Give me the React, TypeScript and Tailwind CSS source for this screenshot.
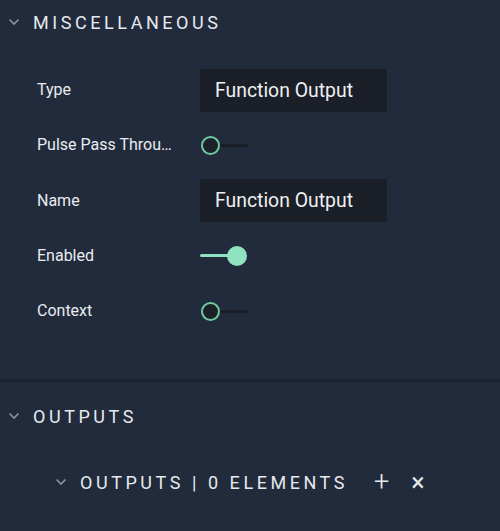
import React from "react";

const Chevron = ({ className = "" }: { className?: string }) => (
  <svg width="12" height="8" viewBox="0 0 12 8" className={className}>
    <path d="M1.5 1.5 L6 6 L10.5 1.5" fill="none" stroke="#8b93a1" strokeWidth="1.6" />
  </svg>
);

const Toggle = ({ on }: { on: boolean }) =>
  on ? (
    <div className="relative w-[48px] h-[20px] flex items-center">
      <div className="h-[3px] w-[38px] bg-[#8fe3c0] rounded-full" />
      <div className="absolute left-[27px] top-0 w-[20px] h-[20px] rounded-full bg-[#8fe3c0]" />
    </div>
  ) : (
    <div className="relative w-[48px] h-[20px] flex items-center">
      <div className="absolute left-[10px] h-[3px] w-[37px] bg-[#181d26] rounded-full" />
      <div className="absolute left-0 top-[1px] w-[19px] h-[19px] rounded-full border-[2.5px] border-[#6fc8a0] bg-[#1b2029]" />
    </div>
  );

const Row = ({ label, children }: { label: string; children: React.ReactNode }) => (
  <div className="h-[55.25px] flex items-center">
    <div className="w-[163px] pl-[37px] box-content text-[16px] text-[#e9ecef] whitespace-nowrap">{label}</div>
    <div className="flex items-center">{children}</div>
  </div>
);

const Input = ({ value }: { value: string }) => (
  <div className="w-[187px] h-[43px] bg-[#1a1f28] flex items-center pl-[15px] text-[19.4px] text-[#eef0f2]">
    {value}
  </div>
);

export default function App() {
  return (
    <div
      className="w-[500px] h-[531px] bg-[#222b3c] overflow-hidden"
      style={{ fontFamily: "Roboto, 'Liberation Sans', sans-serif" }}
    >
      <div className="h-[44px] flex items-center">
        <Chevron className="ml-[8px] mr-[13px]" />
        <span className="text-[18px] tracking-[3.55px] text-[#e6e9ee]">MISCELLANEOUS</span>
      </div>
      <div className="pt-[18.5px]">
        <Row label="Type">
          <Input value="Function Output" />
        </Row>
        <Row label="Pulse Pass Throu…">
          <div className="ml-[1px]"><Toggle on={false} /></div>
        </Row>
        <Row label="Name">
          <Input value="Function Output" />
        </Row>
        <Row label="Enabled">
          <Toggle on={true} />
        </Row>
        <Row label="Context">
          <div className="ml-[1px]"><Toggle on={false} /></div>
        </Row>
      </div>
      <div className="mt-[40.5px] h-[3px] bg-[#1d2431]" />
      <div className="h-[66px] flex items-center pt-[2px]">
        <Chevron className="ml-[8px] mr-[13px]" />
        <span className="text-[18px] tracking-[3.55px] text-[#e6e9ee]">OUTPUTS</span>
      </div>
      <div className="mt-[18px] h-[32px] flex items-center">
        <Chevron className="ml-[55px] mr-[13px]" />
        <span className="text-[18px] tracking-[3.55px] text-[#e6e9ee]">OUTPUTS | 0 ELEMENTS</span>
        <span className="ml-[26px] text-[27px] leading-none text-[#e6e9ee] font-light">+</span>
        <span className="ml-[22px] text-[25px] leading-none text-[#e6e9ee]">×</span>
      </div>
    </div>
  );
}
